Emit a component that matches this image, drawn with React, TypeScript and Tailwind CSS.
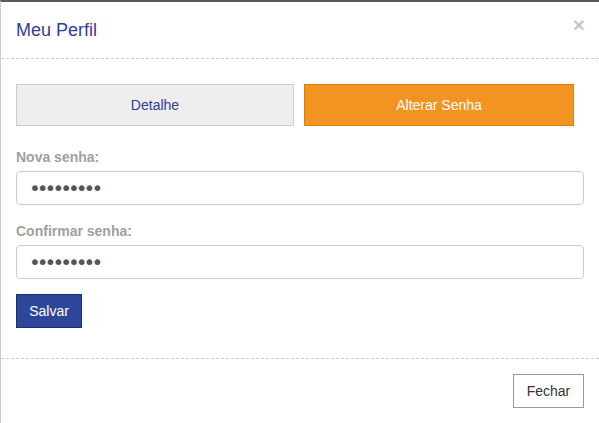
import React from 'react';

const App: React.FC = () => {
  return (
    <div className="w-[599px] h-[423px] bg-white border-t-2 border-t-[#5a5a5a] border-l border-l-[#cfcfcf] font-['Liberation_Sans',Arial,sans-serif] overflow-hidden">
      {/* Header */}
      <div className="h-[57px] flex items-center justify-between pl-[15px] pr-[14px] border-b border-dashed border-b-[#cccccc]">
        <h4 className="text-[18px] text-[#2f4196] leading-none">Meu Perfil</h4>
        <button className="text-[21px] font-bold leading-none text-[#c8c8c8] -mt-[11px]">×</button>
      </div>

      {/* Body */}
      <div className="pl-[15px] pr-[15px] pt-[25px] h-[299px]">
        <div className="flex gap-[10px]">
          <button className="w-[278px] h-[42px] bg-[#eeeeee] border border-[#cccccc] text-[14px] text-[#2f4196]">
            Detalhe
          </button>
          <button className="w-[270px] h-[42px] bg-[#f39322] border border-[#e07f05] text-[14px] text-white">
            Alterar Senha
          </button>
        </div>

        <label className="block mt-[21px] text-[14px] leading-5 font-bold text-[#a0a0a0]">Nova senha:</label>
        <input
          type="password"
          defaultValue="123456789"
          className="block mt-[4px] w-[568px] h-[34px] pl-[12px] pr-[12px] rounded-[4px] border border-[#cccccc] font-['DejaVu_Sans',sans-serif] text-[20px] tracking-[-4px] text-[#555555] outline-none"
        />

        <label className="block mt-[16px] text-[14px] leading-5 font-bold text-[#a0a0a0]">Confirmar senha:</label>
        <input
          type="password"
          defaultValue="123456789"
          className="block mt-[4px] w-[568px] h-[34px] pl-[12px] pr-[12px] rounded-[4px] border border-[#cccccc] font-['DejaVu_Sans',sans-serif] text-[20px] tracking-[-4px] text-[#555555] outline-none"
        />

        <button className="mt-[15px] w-[66px] h-[34px] bg-[#2e4699] border border-[#1b2d7a] text-[14px] text-white">
          Salvar
        </button>
      </div>

      {/* Footer */}
      <div className="border-t border-dashed border-t-[#cccccc] flex justify-end pt-[15px] pr-[15px]">
        <button className="w-[71px] h-[34px] bg-white border border-[#999999] text-[14px] text-[#333333]">
          Fechar
        </button>
      </div>
    </div>
  );
};

export default App;
